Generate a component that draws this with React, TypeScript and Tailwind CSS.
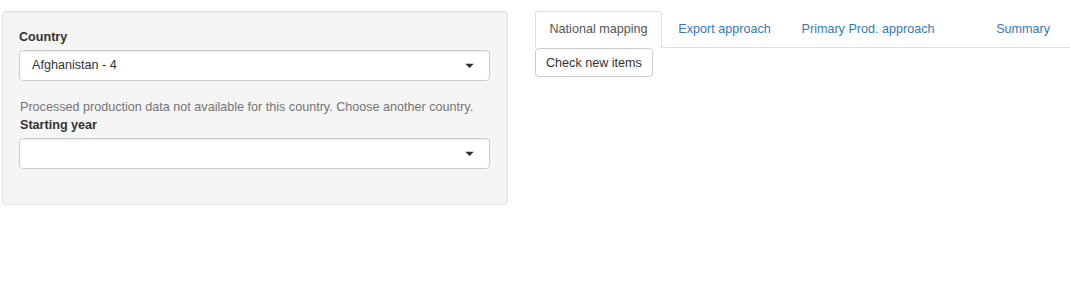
import React from "react";

function Caret() {
  return (
    <svg width="9" height="5" viewBox="0 0 9 5" className="absolute right-[15px] top-1/2 -translate-y-1/2">
      <polygon points="0,0 9,0 4.5,4.5" fill="#333333" />
    </svg>
  );
}

function SelectBox({ value }: { value?: string }) {
  return (
    <div className="relative h-[31px] w-full rounded-[3.6px] border border-[#cccccc] bg-white pl-[12px] text-[#333333] shadow-[inset_0_1px_1px_rgba(0,0,0,0.075)]">
      <div className="leading-[29px]">{value ?? ""}</div>
      <Caret />
    </div>
  );
}

export default function App() {
  const tabs = [
    { label: "National mapping", active: true },
    { label: "Export approach" },
    { label: "Primary Prod. approach" },
    { label: "" },
    { label: "Summary" },
  ];
  return (
    <div
      className="flex min-h-[281px] w-[1070px] items-start bg-white text-[12.6px] leading-[18px] text-[#333333]"
      style={{ fontFamily: '"Liberation Sans", Arial, sans-serif' }}
    >
      <div className="ml-[2px] mt-[11px] w-[506px] rounded-[3.6px] border border-[#e3e3e3] bg-[#f5f5f5] pb-[35px] pl-[16px] pr-[17px] pt-[16px] shadow-[inset_0_1px_1px_rgba(0,0,0,0.05)]">
        <div className="mb-[4px] font-bold">Country</div>
        <SelectBox value="Afghanistan - 4" />
        <div className="mt-[17px] pl-[1px] text-[#737373]">
          Processed production data not available for this country. Choose another country.
        </div>
        <div className="mb-[4px] pl-[1px] font-bold">Starting year</div>
        <SelectBox />
      </div>
      <div className="ml-[27px] mt-[11px] flex-1">
        <ul className="flex border-b border-[#dddddd]">
          {tabs.map((t, i) => (
            <li key={i} className="-mb-px mr-[1.8px] flex">
              {t.active ? (
                <span className="rounded-t-[3.6px] border border-[#dddddd] border-b-transparent bg-white px-[13.5px] pb-[9px] pt-[8px] text-[#555555]">
                  {t.label}
                </span>
              ) : (
                <span className="min-w-[29px] rounded-t-[3.6px] border border-transparent px-[13.5px] pb-[9px] pt-[8px] text-[#337ab7]">
                  {t.label}
                </span>
              )}
            </li>
          ))}
        </ul>
        <button className="h-[29px] rounded-[3.6px] border border-[#cccccc] bg-white px-[10px] leading-[18px] text-[#333333]">
          Check new items
        </button>
      </div>
    </div>
  );
}
